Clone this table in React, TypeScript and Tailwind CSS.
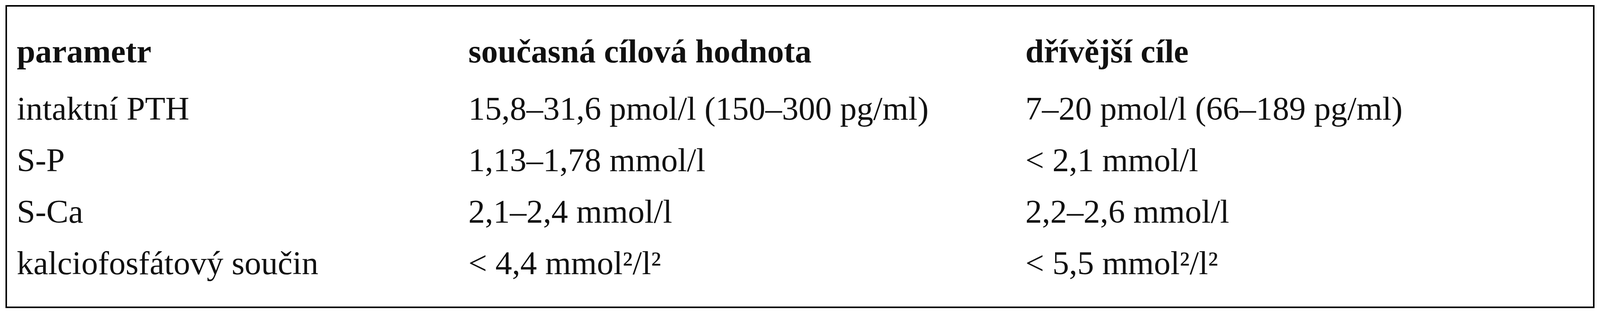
const header = ['parametr', 'současná cílová hodnota', 'dřívější cíle'];

const rows: string[][] = [
  ['intaktní PTH', '15,8–31,6 pmol/l (150–300 pg/ml)', '7–20 pmol/l (66–189 pg/ml)'],
  ['S-P', '1,13–1,78 mmol/l', '< 2,1 mmol/l'],
  ['S-Ca', '2,1–2,4 mmol/l', '2,2–2,6 mmol/l'],
  ['kalciofosfátový součin', '< 4,4 mmol²/l²', '< 5,5 mmol²/l²'],
];

const cols = 'grid grid-cols-[28.65%_35.34%_1fr]';

export default function App() {
  return (
    <div className="w-full h-[800px] bg-white pt-[13px] px-[14px] font-['Liberation_Serif',serif] text-[85px] text-[#111]">
      <div className="w-full h-[777px] border-4 border-black pl-[25px] pt-[48px]">
        <div className={`${cols} mb-[14px] font-bold leading-[133px]`}>
          {header.map((h) => (
            <div key={h} className="whitespace-nowrap">
              {h}
            </div>
          ))}
        </div>
        {rows.map((r) => (
          <div key={r[0]} className={`${cols} leading-[132px]`}>
            {r.map((c, i) => (
              <div key={i} className="whitespace-nowrap">
                {c}
              </div>
            ))}
          </div>
        ))}
      </div>
    </div>
  );
}
